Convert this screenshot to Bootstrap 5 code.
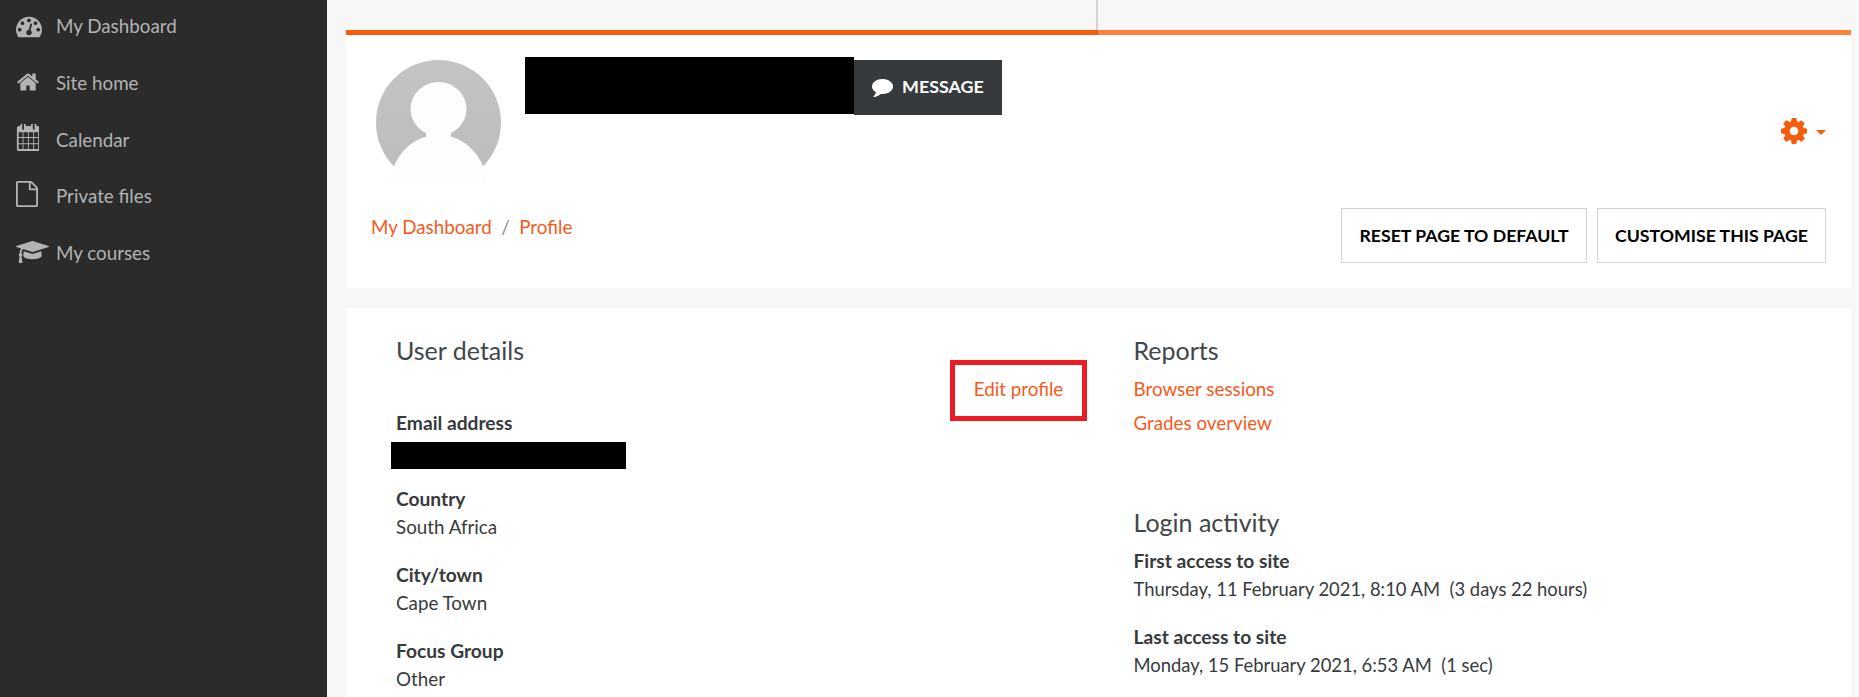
<!DOCTYPE html>
<html lang="en">
<head>
<meta charset="utf-8">
<title>Profile</title>
<link href="https://cdn.jsdelivr.net/npm/bootstrap@5.3.0/dist/css/bootstrap.min.css" rel="stylesheet">
<style>
html,body{height:100%;overflow:hidden}
body{background:#f7f7f7;font-family:Lato,"Liberation Sans",sans-serif;font-size:18.8px;line-height:28px;color:#373a3c}
a{color:#f55a1b;text-decoration:none}
.shell{height:697px}
.side{width:327px;background:#2b2b2b;color:#b3b3b3;padding-top:12px;flex:none}
.side-item{height:28px;margin-bottom:28.8px;color:#b3b3b3}
.side-slot{width:56px;flex:none;padding-left:16px}
.side-slot svg{display:block}
.nudge-1{margin-top:-2px}
.nudge-2{margin-top:-4px}
.main-area{padding:0 8px 0 19px;min-width:0}
.strip{height:30px}
.strip-a{width:752px;border-right:2px solid #d4d4d4;box-sizing:border-box}
.bar{height:5px;background:#ff7f41}
.bar-a{width:752px;height:5px;background:#f55c0c}
.head-panel{background:#fff;height:253px;padding:25px 25px 0 25px}
.avatar{margin-left:5px;flex:none;display:block}
.mask-name{width:329px;height:57px;margin-left:24px;margin-top:-3px;background:#000;flex:none}
.msg-btn{height:55px;width:148px;background:#373a3c;color:#fff;border-radius:0;border:0;font-weight:700;font-size:17.9px;text-transform:uppercase;padding:0 0 2px 18px;gap:9px}
.msg-btn:hover{background:#373a3c;color:#fff}
.gear-wrap{margin-top:58px;gap:9px;color:#f55c0c}
.tip{width:0;height:0;border-left:5.5px solid transparent;border-right:5.5px solid transparent;border-top:5.5px solid #f55c0c;margin-top:3px}
.crumb{margin:5px 0 0;--bs-breadcrumb-divider-color:#818a91;--bs-breadcrumb-item-padding-x:9.5px;--bs-breadcrumb-margin-bottom:0}
.crumb .breadcrumb-item{color:#818a91}
.lower-row{margin-top:23px}
.plain-btn{height:55px;background:#fff;border:1px solid #d4d4d4;border-radius:0;color:#000;font-weight:700;font-size:17.7px;text-transform:uppercase;padding:0;line-height:53px}
.plain-btn:hover{background:#fff;color:#000;border-color:#d4d4d4}
.btn-reset{width:246px}
.btn-cust{width:229px}
.btn-pair{gap:10px}
.body-panel{background:#fff;margin-top:20px;height:420px;padding-top:27px}
.col-left{width:604px;padding-left:50px;flex:none}
.col-right{padding-left:46.5px}
.sect-title{font-size:25px;line-height:30px;font-weight:400;color:#41464a;margin:0}
.detail-title{margin-bottom:44px}
.entry{margin-bottom:20px}
.entry-label{font-weight:700;display:block;font-size:19.2px}
.time-line{font-size:18.4px}
.mask-mail{width:235px;height:27px;background:#000;margin:5px 0 -4px -5px}
.edit-box{width:137px;height:61px;margin-top:25px;border:5px solid #ed1c24;flex:none;line-height:48px;text-align:center}
.link-list{margin:10px 0 70px}
.link-list li{margin-bottom:6px}
.login-title{margin-bottom:10px}
</style>
</head>
<body>
<div class="d-flex shell">
  <nav class="side">
    <div class="side-item d-flex align-items-center"><span class="side-slot"><svg width="26" height="26" viewBox="0 0 1792 1792" fill="#b3b3b3"><path d="M384 1152q0-53-37.500-90.500t-90.500-37.500-90.500 37.500-37.500 90.500 37.500 90.500 90.500 37.500 90.500-37.500 37.500-90.500zm192-448q0-53-37.500-90.500t-90.500-37.500-90.500 37.500-37.500 90.500 37.500 90.500 90.500 37.500 90.500-37.500 37.500-90.500zm428 481l101-382q6-26-7.500-48.500t-38.500-29.500-48 6.500-30 39.500l-101 382q-60 5-107 43.500t-63 98.500q-20 77 20 146t117 89 146-20 89-117q16-60-6-117t-72-91zm660-33q0-53-37.500-90.500t-90.500-37.500-90.500 37.500-37.500 90.500 37.500 90.500 90.500 37.500 90.500-37.500 37.500-90.500zm-640-640q0-53-37.500-90.500t-90.500-37.500-90.500 37.500-37.500 90.500 37.500 90.500 90.500 37.500 90.500-37.500 37.500-90.500zm448 192q0-53-37.500-90.500t-90.500-37.500-90.500 37.500-37.500 90.500 37.500 90.500 90.500 37.500 90.500-37.500 37.500-90.500zm320 448q0 261-141 483-19 29-54 29h-1402q-35 0-54-29-141-221-141-483 0-182 71-348t191-286 286-191 348-71 348 71 286 191 191 286 71 348z" fill-rule="evenodd"/></svg></span><span>My Dashboard</span></div>
    <div class="side-item d-flex align-items-center"><span class="side-slot nudge-1"><svg width="24" height="24" viewBox="0 0 1792 1792" fill="#b3b3b3"><path d="M1472 992v480q0 26-19 45t-45 19h-384v-384h-256v384h-384q-26 0-45-19t-19-45v-480q0-1 .5-3t.5-3l575-474 575 474q1 2 1 6zm223-69l-62 74q-8 9-21 11h-3q-13 0-21-7l-692-577-692 577q-12 8-24 7-13-2-21-11l-62-74q-8-10-7-23.500t11-21.500l719-599q32-26 76-26t76 26l244 204v-195q0-14 9-23t23-9h192q14 0 23 9t9 23v408l219 182q10 8 11 21.500t-7 23.500z"/></svg></span><span>Site home</span></div>
    <div class="side-item d-flex align-items-center"><span class="side-slot nudge-2"><svg width="23" height="27" viewBox="0 128 1664 1664" preserveAspectRatio="none" fill="#b3b3b3"><path d="M192 1664h288v-288h-288v288zm352 0h320v-288h-320v288zm-352-352h288v-320h-288v320zm352 0h320v-320h-320v320zm-352-384h288v-288h-288v288zm736 736h320v-288h-320v288zm-384-736h320v-288h-320v288zm768 736h288v-288h-288v288zm-384-352h320v-320h-320v320zm-352-864v-288q0-13-9.500-22.500t-22.500-9.500h-64q-13 0-22.500 9.500t-9.500 22.500v288q0 13 9.500 22.500t22.500 9.500h64q13 0 22.500-9.500t9.500-22.500zm736 864h288v-320h-288v320zm-384-384h320v-288h-320v288zm384 0h288v-288h-288v288zm32-480v-288q0-13-9.500-22.500t-22.500-9.500h-64q-13 0-22.500 9.500t-9.500 22.500v288q0 13 9.500 22.500t22.500 9.500h64q13 0 22.500-9.500t9.500-22.500zm384-64v1280q0 52-38 90t-90 38h-1408q-52 0-90-38t-38-90v-1280q0-52 38-90t90-38h128v-96q0-66 47-113t113-47h64q66 0 113 47t47 113v96h384v-96q0-66 47-113t113-47h64q66 0 113 47t47 113v96h128q52 0 90 38t38 90z"/></svg></span><span>Calendar</span></div>
    <div class="side-item d-flex align-items-center"><span class="side-slot nudge-2"><svg width="22" height="26" viewBox="128 0 1536 1792" preserveAspectRatio="none" fill="#b3b3b3"><path d="M1596 380q28 28 48 76t20 88v1152q0 40-28 68t-68 28h-1344q-40 0-68-28t-28-68v-1600q0-40 28-68t68-28h896q40 0 88 20t76 48zm-444-244v376h376q-10-29-22-41l-313-313q-12-12-41-22zm384 1528v-1024h-416q-40 0-68-28t-28-68v-416h-768v1536h1280z"/></svg></span><span>Private files</span></div>
    <div class="side-item d-flex align-items-center"><span class="side-slot nudge-1"><svg width="33" height="26" viewBox="0 0 2304 1792" fill="#b3b3b3"><path d="M1774 836l18 316q4 69-82 128t-235 93.500-323 34.500-323-34.500-235-93.500-82-128l18-316 574 181q22 7 48 7t48-7zm530-324q0 23-22 31l-1120 352q-4 1-10 1t-10-1l-652-206q-43 34-71 111.500t-34 178.500q63 36 63 109 0 69-58 107l58 433q2 14-8 25-9 11-24 11h-192q-15 0-24-11-10-11-8-25l58-433q-58-38-58-107 0-73 65-111 11-207 98-330l-333-104q-22-8-22-31t22-31l1120-352q4-1 10-1t10 1l1120 352q22 8 22 31z"/></svg></span><span>My courses</span></div>
  </nav>
  <main class="main-area flex-grow-1">
    <div class="strip"><div class="strip-a h-100"></div></div>
    <div class="bar"><div class="bar-a"></div></div>
    <section class="head-panel">
      <div class="d-flex align-items-start">
        <svg class="avatar" width="125" height="125" viewBox="0 0 125 125"><defs><linearGradient id="avg" x1="0" y1="0" x2="0" y2="1"><stop offset="0" stop-color="#c4c4c4"/><stop offset="1" stop-color="#bcbcbc"/></linearGradient></defs><circle cx="62.500" cy="62.500" r="62.500" fill="url(#avg)"/><ellipse cx="62.500" cy="49" rx="28" ry="27" fill="#fdfdfd"/><rect x="50" y="66" width="25" height="16" fill="#fdfdfd"/><ellipse cx="62.500" cy="125" rx="48" ry="50" fill="#fdfdfd"/></svg>
        <div class="mask-name"></div>
        <button type="button" class="btn msg-btn d-flex align-items-center"><svg width="21" height="21" viewBox="0 0 1792 1792" fill="#fff"><path d="M1792 896q0 174-120 321.500t-326 233-450 85.500q-70 0-145-8-198 175-460 242-49 14-114 22-17 2-30.500-9t-17.500-29v-1q-3-4-.5-12t2-10 4.500-9.500l6-9 7-8.500 8-9q7-8 31-34.500t34.500-38 31-39.500 32.500-51 27-59 26-76q-157-89-247.500-220t-90.500-281q0-130 71-248.500t191-204.500 286-136.500 348-50.500q244 0 450 85.500t326 233 120 321.500z"/></svg><span>Message</span></button>
        <div class="gear-wrap ms-auto d-flex align-items-center"><svg width="26" height="26" viewBox="128 128 1536 1536" fill="#f55c0c"><path fill-rule="evenodd" d="M1152 896q0-106-75-181t-181-75-181 75-75 181 75 181 181 75 181-75 75-181zm512-109v222q0 12-8 23t-20 13l-185 28q-19 54-39 91 35 50 107 138 10 12 10 25t-9 23q-27 37-99 108t-94 71q-12 0-26-9l-138-108q-44 23-91 38-16 136-29 186-7 27-35 27h-222q-14 0-24.500-8.500t-11.500-21.500l-28-184q-49-16-90-37l-141 107q-10 9-25 9-14 0-25-11-126-114-165-168-7-10-7-23 0-12 8-23 15-21 51-66.500t54-70.500q-27-50-41-99l-183-27q-13-2-21-12.500t-8-23.500v-222q0-12 8-23t19-13l186-28q14-46 39-92-40-57-107-138-10-12-10-24 0-10 9-23 26-36 98.500-107.500t94.500-71.500q13 0 26 10l138 107q44-23 91-38 16-136 29-186 7-27 35-27h222q14 0 24.500 8.500t11.500 21.500l28 184q49 16 90 37l142-107q9-9 24-9 13 0 25 10 129 119 165 170 7 8 7 22 0 12-8 23-15 21-51 66.500t-54 70.500q26 50 41 98l183 28q13 2 21 12.500t8 23.500z"/></svg><span class="tip"></span></div>
      </div>
      <div class="lower-row d-flex align-items-start justify-content-between">
        <nav aria-label="breadcrumb"><ol class="breadcrumb crumb"><li class="breadcrumb-item"><a href="#">My Dashboard</a></li><li class="breadcrumb-item"><a href="#">Profile</a></li></ol></nav>
        <div class="d-flex btn-pair"><button type="button" class="btn plain-btn btn-reset">Reset page to default</button><button type="button" class="btn plain-btn btn-cust">Customise this page</button></div>
      </div>
    </section>
    <section class="body-panel d-flex">
      <div class="col-left">
        <h5 class="sect-title detail-title">User details</h5>
        <div class="entry"><span class="entry-label">Email address</span><div class="mask-mail"></div></div>
        <div class="entry"><span class="entry-label">Country</span>South Africa</div>
        <div class="entry"><span class="entry-label">City/town</span>Cape Town</div>
        <div class="entry"><span class="entry-label">Focus Group</span>Other</div>
      </div>
      <div class="edit-box"><a href="#">Edit profile</a></div>
      <div class="col-right">
        <h5 class="sect-title">Reports</h5>
        <ul class="list-unstyled link-list"><li><a href="#">Browser sessions</a></li><li class="mb-0"><a href="#">Grades overview</a></li></ul>
        <h5 class="sect-title login-title">Login activity</h5>
        <div class="entry"><span class="entry-label">First access to site</span><span class="time-line">Thursday, 11 February 2021, 8:10 AM&nbsp; (3 days 22 hours)</span></div>
        <div class="entry"><span class="entry-label">Last access to site</span><span class="time-line">Monday, 15 February 2021, 6:53 AM&nbsp; (1 sec)</span></div>
      </div>
    </section>
  </main>
</div>
<script src="https://cdn.jsdelivr.net/npm/bootstrap@5.3.0/dist/js/bootstrap.bundle.min.js"></script>
</body>
</html>
